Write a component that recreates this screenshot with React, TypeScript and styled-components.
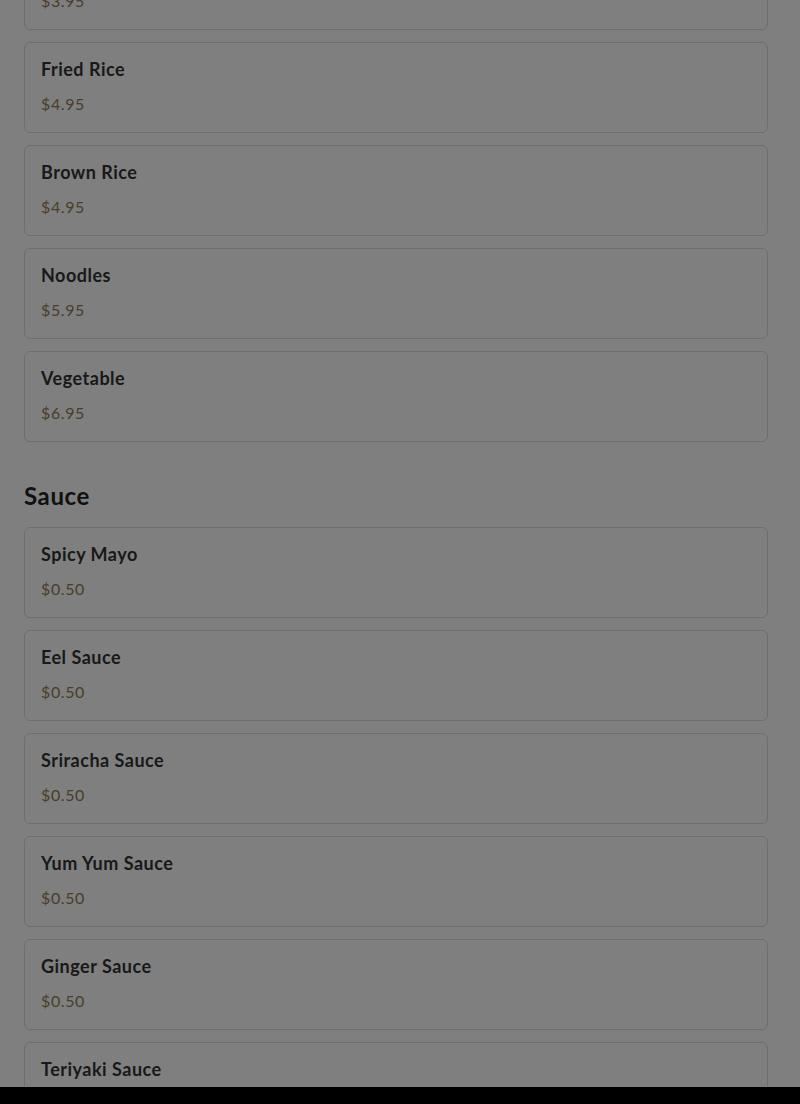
import React from 'react';
import styled, { createGlobalStyle } from 'styled-components';

const GlobalStyle = createGlobalStyle`
  html, body {
    margin: 0;
    padding: 0;
    background: #ffffff;
    font-family: Lato, "Noto Sans", sans-serif;
    overflow: hidden;
  }
`;

const Page = styled.main`
  display: flex;
  flex-direction: column;
  padding: 0 32px 0 24px;
  margin-top: -61px;
`;

const Section = styled.section`
  display: flex;
  flex-direction: column;
  gap: 12px;
  & + & {
    margin-top: 39px;
  }
`;

const SectionTitle = styled.h2`
  margin: 0 0 5px;
  font-size: 24px;
  line-height: 29px;
  font-weight: 700;
  letter-spacing: 0.6px;
  color: #222222;
`;

const Card = styled.div`
  display: flex;
  flex-direction: column;
  gap: 11px;
  padding: 16px;
  border: 1px solid #dcdcdc;
  border-radius: 6px;
  background: #ffffff;
`;

const ItemName = styled.div`
  font-size: 18px;
  line-height: 21px;
  font-weight: 700;
  letter-spacing: 0.5px;
  color: #333333;
`;

const Price = styled.div`
  font-size: 16px;
  line-height: 25px;
  letter-spacing: 0.6px;
  color: #947c52;
`;

const Backdrop = styled.div`
  position: fixed;
  inset: 0;
  background: rgba(0, 0, 0, 0.5);
`;

const BottomBar = styled.div`
  position: fixed;
  left: 0;
  right: 0;
  bottom: 0;
  height: 17px;
  background: #000000;
`;

interface Item {
  name: string;
  price: string;
}

const sides: Item[] = [
  { name: 'Steamed Rice', price: '$3.95' },
  { name: 'Fried Rice', price: '$4.95' },
  { name: 'Brown Rice', price: '$4.95' },
  { name: 'Noodles', price: '$5.95' },
  { name: 'Vegetable', price: '$6.95' },
];

const sauces: Item[] = [
  { name: 'Spicy Mayo', price: '$0.50' },
  { name: 'Eel Sauce', price: '$0.50' },
  { name: 'Sriracha Sauce', price: '$0.50' },
  { name: 'Yum Yum Sauce', price: '$0.50' },
  { name: 'Ginger Sauce', price: '$0.50' },
  { name: 'Teriyaki Sauce', price: '$0.50' },
];

const MenuCard = ({ name, price }: Item) => (
  <Card>
    <ItemName>{name}</ItemName>
    <Price>{price}</Price>
  </Card>
);

export default function App() {
  return (
    <>
      <GlobalStyle />
      <Page>
        <Section>
          {sides.map((item) => (
            <MenuCard key={item.name} {...item} />
          ))}
        </Section>
        <Section>
          <SectionTitle>Sauce</SectionTitle>
          {sauces.map((item) => (
            <MenuCard key={item.name} {...item} />
          ))}
        </Section>
      </Page>
      <Backdrop />
      <BottomBar />
    </>
  );
}
